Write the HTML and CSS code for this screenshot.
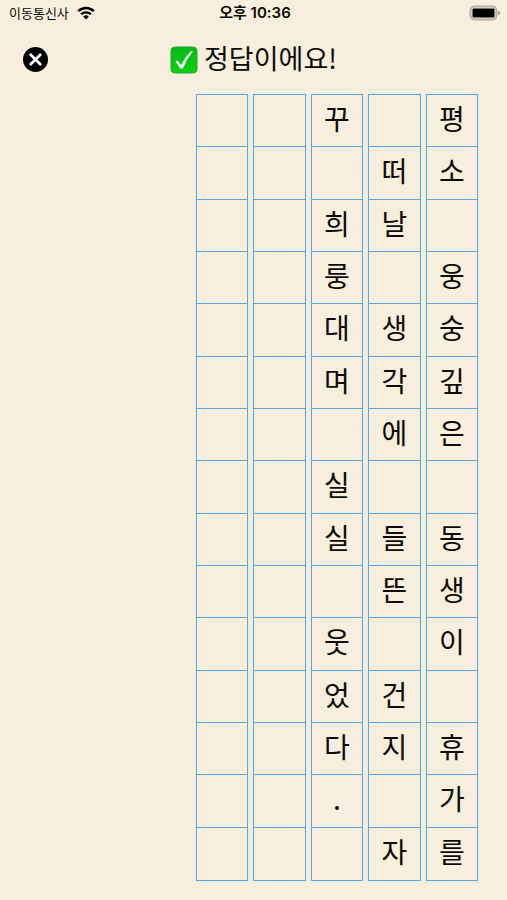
FILE: index.html
```
<!DOCTYPE html>
<html lang="ko">

<head>
    <meta charset="UTF-8">
    <meta name="viewport" content="width=device-width, initial-scale=1.0">
    <title>정답이에요!</title>
    <link rel="stylesheet" href="styles.css">
</head>

<body>
    <div class="status-bar">
        <div class="carrier">
            <span>이동통신사</span>
            <svg class="wifi" viewBox="0 0 18 14" aria-hidden="true">
                <path d="M1.2 5.2a11.2 11.2 0 0 1 15.6 0" fill="none" stroke="#000" stroke-width="2.4" />
                <path d="M4.1 8.3a7 7 0 0 1 9.8 0" fill="none" stroke="#000" stroke-width="2.2" />
                <path d="M9 13.6 6.2 10.7a4 4 0 0 1 5.6 0z" />
            </svg>
        </div>
        <div class="clock">오후 10:36</div>
        <svg class="battery" viewBox="0 0 32 16" aria-hidden="true">
            <rect x="1.500" y="1.500" width="26" height="13" rx="4" fill="none" stroke="#b5b0a5" stroke-width="2" />
            <rect x="3.500" y="3.500" width="22" height="9" rx="1" />
            <path d="M29 5.500v5q2.200-1 2.200-2.500t-2.200-2.500z" fill="#aaa69c" />
        </svg>
    </div>

    <header class="header">
        <button class="close-btn" type="button" aria-label="닫기">
            <svg viewBox="0 0 24 24" aria-hidden="true">
                <circle cx="12" cy="12" r="12" />
                <path d="M7.400 7.400l9.200 9.200M16.600 7.400l-9.200 9.200" stroke="#fff" stroke-width="2.600" stroke-linecap="round" />
            </svg>
        </button>
        <h1 class="title">
            <svg class="check" viewBox="0 0 28 28" aria-hidden="true">
                <defs>
                    <linearGradient id="green" x1="0" y1="0" x2="0" y2="1">
                        <stop offset="0" stop-color="#08b91a" />
                        <stop offset="1" stop-color="#0bd20f" />
                    </linearGradient>
                </defs>
                <rect x="1" y="1" width="26" height="26" rx="4" fill="url(#green)" stroke="#22a72c" />
                <path d="M5.500 15.500q1.500-1.700 3 0l2.700 3.700Q14.500 11.500 20.500 5.500q1.500-1 2.300 0Q16.500 13 13 22q-1.500 1.500-3 0z" fill="#fff" />
            </svg>
            <span class="title-text">정답이에요!</span>
        </h1>
    </header>

    <!-- Read top to bottom, first column on the right -->
    <main class="board">
        <div class="column">
            <div class="cell">평</div>
            <div class="cell">소</div>
            <div class="cell"></div>
            <div class="cell">웅</div>
            <div class="cell">숭</div>
            <div class="cell">깊</div>
            <div class="cell">은</div>
            <div class="cell"></div>
            <div class="cell">동</div>
            <div class="cell">생</div>
            <div class="cell">이</div>
            <div class="cell"></div>
            <div class="cell">휴</div>
            <div class="cell">가</div>
            <div class="cell">를</div>
        </div>
        <div class="column">
            <div class="cell"></div>
            <div class="cell">떠</div>
            <div class="cell">날</div>
            <div class="cell"></div>
            <div class="cell">생</div>
            <div class="cell">각</div>
            <div class="cell">에</div>
            <div class="cell"></div>
            <div class="cell">들</div>
            <div class="cell">뜬</div>
            <div class="cell"></div>
            <div class="cell">건</div>
            <div class="cell">지</div>
            <div class="cell"></div>
            <div class="cell">자</div>
        </div>
        <div class="column">
            <div class="cell">꾸</div>
            <div class="cell"></div>
            <div class="cell">희</div>
            <div class="cell">룽</div>
            <div class="cell">대</div>
            <div class="cell">며</div>
            <div class="cell"></div>
            <div class="cell">실</div>
            <div class="cell">실</div>
            <div class="cell"></div>
            <div class="cell">웃</div>
            <div class="cell">었</div>
            <div class="cell">다</div>
            <div class="cell">.</div>
            <div class="cell"></div>
        </div>
        <div class="column">
            <div class="cell"></div>
            <div class="cell"></div>
            <div class="cell"></div>
            <div class="cell"></div>
            <div class="cell"></div>
            <div class="cell"></div>
            <div class="cell"></div>
            <div class="cell"></div>
            <div class="cell"></div>
            <div class="cell"></div>
            <div class="cell"></div>
            <div class="cell"></div>
            <div class="cell"></div>
            <div class="cell"></div>
            <div class="cell"></div>
        </div>
        <div class="column">
            <div class="cell"></div>
            <div class="cell"></div>
            <div class="cell"></div>
            <div class="cell"></div>
            <div class="cell"></div>
            <div class="cell"></div>
            <div class="cell"></div>
            <div class="cell"></div>
            <div class="cell"></div>
            <div class="cell"></div>
            <div class="cell"></div>
            <div class="cell"></div>
            <div class="cell"></div>
            <div class="cell"></div>
            <div class="cell"></div>
        </div>
    </main>
</body>

</html>
```

FILE: styles.css
```
* {
    box-sizing: border-box;
}

body {
    margin: 0;
    min-height: 100vh;
    display: flex;
    flex-direction: column;
    background: #f7eedd;
    color: #0d0b08;
    font-family: "Noto Sans CJK KR", sans-serif;
}

.status-bar {
    display: grid;
    grid-template-columns: 1fr auto 1fr;
    align-items: center;
    height: 26px;
    padding: 0 6px 0 9px;
    font-size: 13px;
    line-height: 20px;
}

.carrier {
    display: flex;
    align-items: center;
    gap: 8px;
}

.wifi {
    width: 18px;
    height: 14px;
}

.clock {
    font-family: Inter, "Noto Sans CJK KR", sans-serif;
    font-size: 15px;
    font-weight: 600;
}

.battery {
    width: 32px;
    height: 16px;
    justify-self: end;
}

.header {
    display: grid;
    grid-template-columns: 1fr auto 1fr;
    align-items: center;
    height: 67px;
    padding: 0 23px;
}

.close-btn {
    width: 25px;
    height: 25px;
    padding: 0;
    border: none;
    background: none;
    cursor: pointer;
}

.close-btn svg {
    display: block;
}

.title {
    display: flex;
    align-items: center;
    gap: 6px;
    margin: 0;
    font-size: 27px;
    font-weight: 400;
    line-height: 40px;
}

.title-text {
    padding-bottom: 3px;
}

.check {
    width: 28px;
    height: 28px;
}

.board {
    flex: 1;
    display: flex;
    flex-direction: row-reverse;
    gap: 5px;
    width: 282px;
    margin: 1px 29px 19px auto;
}

.column {
    flex: 1;
    display: grid;
    grid-auto-rows: 1fr;
    border: 1px solid #5aa8e2;
    box-shadow: 0 0 2px #c9e6f3;
}

.cell {
    display: flex;
    align-items: center;
    justify-content: center;
    min-height: 44px;
    padding-bottom: 5px;
    border-bottom: 1px solid #5aa8e2;
    font-size: 28px;
    line-height: 38px;
}

.cell:last-child {
    border-bottom: none;
}
```
